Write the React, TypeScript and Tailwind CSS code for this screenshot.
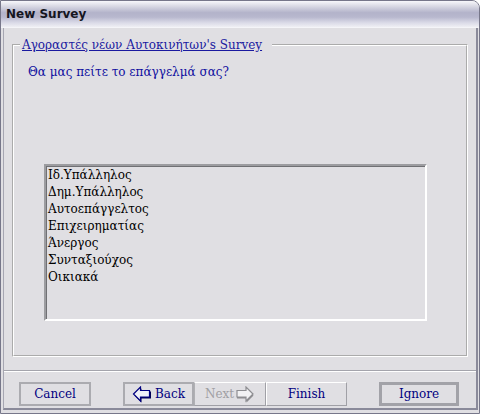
import React from "react";

const serif = { fontFamily: '"DejaVu Serif", "Liberation Serif", serif' };

function LeftArrow() {
  return (
    <svg width="20" height="17" viewBox="0 0 20 17" className="block">
      <polygon points="2.5,9.5 9.5,2.5 9.5,5.5 19,5.5 19,12.5 9.5,12.5 9.5,16.5" fill="#000050" />
      <polygon points="1.5,8 8.5,1 8.5,4.5 17.5,4.5 17.5,11 8.5,11 8.5,15" fill="#eef0f8" stroke="#000080" strokeWidth="1.2" strokeLinejoin="miter" />
    </svg>
  );
}

function RightArrow() {
  return (
    <svg width="20" height="17" viewBox="0 0 20 17" className="block">
      <polygon points="18.5,9.5 11.5,2.5 11.5,5.5 2,5.5 2,12.5 11.5,12.5 11.5,16.5" fill="#8c8c90" />
      <polygon points="18,8 11,1 11,4.5 2,4.5 2,11 11,11 11,15" fill="#f2f2f4" stroke="#8e8e92" strokeWidth="1.2" strokeLinejoin="miter" />
    </svg>
  );
}

const items = [
  "Ιδ.Υπάλληλος",
  "Δημ.Υπάλληλος",
  "Αυτοεπάγγελτος",
  "Επιχειρηματίας",
  "Άνεργος",
  "Συνταξιούχος",
  "Οικιακά",
];

export default function App() {
  return (
    <div className="w-[480px] h-[414px] bg-[#e0dfe3] flex flex-col overflow-hidden rounded-tr-[8px] border border-[#77778a]">
      <div
        className="h-[27px] shrink-0 flex items-center pl-[5px] pb-[1px] text-[12px] font-bold text-[#15151f] bg-[linear-gradient(to_bottom,#f8f8fb_0%,#dcdce6_18%,#b3b3ca_45%,#b8b8ce_62%,#d8d8e6_82%,#efeff4_100%)] border-b border-[#f4f4f8]"
        style={{ fontFamily: '"DejaVu Sans", "Liberation Sans", sans-serif' }}
      >
        New Survey
      </div>
      <div className="flex-1 flex flex-col ml-[2px] mr-[1px] mb-[3px] border-l border-r-[2px] border-b-[2px] border-l-[#a6a6b2] border-r-[#8a8a9a] border-b-[#8a8a9a]" style={serif}>
        <fieldset className="mt-[10px] ml-[8px] w-[456px] h-[319px] border-2 border-white [border-style:groove] p-0">
          <legend className="ml-[6px] pl-[2px] pr-[10px] text-[12px] leading-[14px] text-[#1a1aa0] underline">
            Αγοραστές νέων Αυτοκινήτων's Survey
          </legend>
          <div className="pl-[14px]">
            <div className="mt-[13px] text-[12px] leading-[14px] text-[#1010a0]">Θα μας πείτε το επάγγελμά σας?</div>
            <div className="mt-[85px] ml-[16px] w-[383px] h-[157px] border-2 border-t-[#9c9ca0] border-l-[#9c9ca0] border-b-white border-r-white shadow-[inset_1px_1px_0_#707074] pt-[1px] pl-[2px]">
              {items.map((it) => (
                <div key={it} className="text-[12px] leading-[17px] text-black">
                  {it}
                </div>
              ))}
            </div>
          </div>
        </fieldset>
        <div className="mt-[13px] border-t border-[#a4a4ac] border-b border-b-white" />
        <div className="mt-[10px] flex items-center text-[12px] text-[#000080]">
          <div className="ml-[15px] w-[72px] h-[24px] flex items-center justify-center border-2 border-[#ababb0]">Cancel</div>
          <div className="ml-[32px] w-[71px] h-[24px] flex items-center justify-center gap-[3px] border-2 border-[#ababb0]">
            <LeftArrow />
            <span>Back</span>
          </div>
          <div className="w-[72px] h-[24px] flex items-center justify-center gap-[1px] border border-t-white border-l-[#b0b0b4] border-b-[#a0a0a6] border-r-[#a0a0a6] text-[#a0a0a4]">
            <span>Next</span>
            <RightArrow />
          </div>
          <div className="w-[81px] h-[24px] flex items-center justify-center border border-t-white border-l-white border-b-[#a0a0a6] border-r-[#a0a0a6]">Finish</div>
          <div className="ml-[32px] w-[80px] h-[24px] flex items-center justify-center border-[3px] border-[#a2a2a8]">Ignore</div>
        </div>
      </div>
    </div>
  );
}
